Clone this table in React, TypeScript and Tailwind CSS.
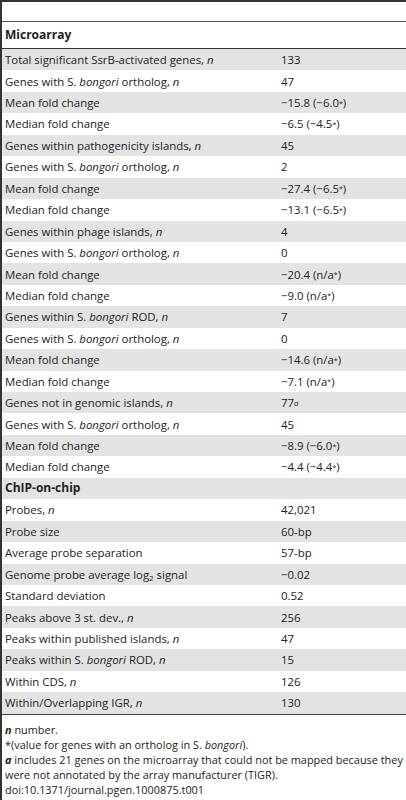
import React from "react";

type Row = { label: React.ReactNode; value?: React.ReactNode; header?: boolean };

const S = () => (
  <>
    <span>S. </span>
    <i>bongori</i>
  </>
);
const N = () => <i>n</i>;
const St = () => <sup className="text-[7px] relative -top-[1.5px]">*</sup>;

const rows: Row[] = [
  { label: <>Total significant SsrB-activated genes, <N /></>, value: "133" },
  { label: <>Genes with <S /> ortholog, <N /></>, value: "47" },
  { label: "Mean fold change", value: <>−15.8 (−6.0<St />)</> },
  { label: "Median fold change", value: <>−6.5 (−4.5<St />)</> },
  { label: <>Genes within pathogenicity islands, <N /></>, value: "45" },
  { label: <>Genes with <S /> ortholog, <N /></>, value: "2" },
  { label: "Mean fold change", value: <>−27.4 (−6.5<St />)</> },
  { label: "Median fold change", value: <>−13.1 (−6.5<St />)</> },
  { label: <>Genes within phage islands, <N /></>, value: "4" },
  { label: <>Genes with <S /> ortholog, <N /></>, value: "0" },
  { label: "Mean fold change", value: <>−20.4 (n/a<St />)</> },
  { label: "Median fold change", value: <>−9.0 (n/a<St />)</> },
  { label: <>Genes within <S /> ROD, <N /></>, value: "7" },
  { label: <>Genes with <S /> ortholog, <N /></>, value: "0" },
  { label: "Mean fold change", value: <>−14.6 (n/a<St />)</> },
  { label: "Median fold change", value: <>−7.1 (n/a<St />)</> },
  { label: <>Genes not in genomic islands, <N /></>, value: <>77<sup className="text-[8px] italic relative -top-[1px]">a</sup></> },
  { label: <>Genes with <S /> ortholog, <N /></>, value: "45" },
  { label: "Mean fold change", value: <>−8.9 (−6.0<St />)</> },
  { label: "Median fold change", value: <>−4.4 (−4.4<St />)</> },
  { label: "ChIP-on-chip", header: true },
  { label: <>Probes, <N /></>, value: "42,021" },
  { label: "Probe size", value: "60-bp" },
  { label: "Average probe separation", value: "57-bp" },
  { label: <>Genome probe average log<sub className="text-[8px]">2</sub> signal</>, value: "−0.02" },
  { label: "Standard deviation", value: "0.52" },
  { label: <>Peaks above 3 st. dev., <N /></>, value: "256" },
  { label: <>Peaks within published islands, <N /></>, value: "47" },
  { label: <>Peaks within <S /> ROD, <N /></>, value: "15" },
  { label: <>Within CDS, <N /></>, value: "126" },
  { label: <>Within/Overlapping IGR, <N /></>, value: "130" },
];

export default function App() {
  return (
    <div
      className="w-[406px] h-[800px] overflow-hidden bg-white text-[#222] border-l-2 border-[#333]"
      style={{ fontFamily: '"Open Sans", "Noto Sans", sans-serif' }}
    >
      <div className="border-t-2 border-[#333] h-[22px] border-b-[1.5px] border-b-[#555]" />
      <div className="h-[27px] flex items-center pl-[3px] text-[12px] font-bold border-b-[1.5px] border-[#333]">
        Microarray
      </div>
      {rows.map((r, i) => (
        <div
          key={i}
          className={`h-[21.45px] flex items-center text-[11.4px] ${i % 2 === 0 ? "bg-[#e3e3e3]" : "bg-white"}`}
        >
          <div className={`w-[279px] pl-[3px] whitespace-nowrap ${r.header ? "font-bold text-[12px]" : ""}`}>
            {r.label}
          </div>
          <div className="whitespace-nowrap">{r.value}</div>
        </div>
      ))}
      <div className="border-t-[1.5px] border-[#444] pt-[7px] pl-[3px] text-[10.9px] leading-[15px] whitespace-nowrap">
        <div>
          <b><i>n</i></b> number.
        </div>
        <div>
          *(value for genes with an ortholog in <S />).
        </div>
        <div>
          <b><i>a</i></b> includes 21 genes on the microarray that could not be mapped because they
        </div>
        <div>were not annotated by the array manufacturer (TIGR).</div>
        <div>doi:10.1371/journal.pgen.1000875.t001</div>
      </div>
    </div>
  );
}
